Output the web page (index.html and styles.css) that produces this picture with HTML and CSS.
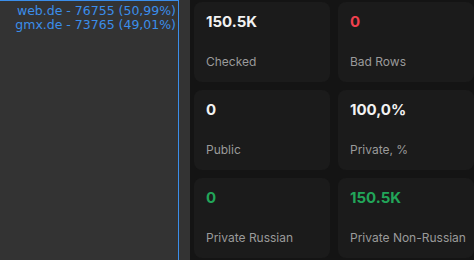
FILE: index.html
```html
<!DOCTYPE html>
<html lang="en">
<head>
    <meta charset="UTF-8">
    <meta name="viewport" content="width=device-width, initial-scale=1.0">
    <title>Stats</title>
    <link rel="stylesheet" href="styles.css">
</head>
<body>
    <div class="side">
        <div class="domains">
            <div>web.de - 76755 (50,99%)</div>
            <div>gmx.de - 73765 (49,01%)</div>
        </div>
    </div>

    <div class="stats">
        <div class="card">
            <div class="value">150.5K</div>
            <div class="label">Checked</div>
        </div>
        <div class="card">
            <div class="value bad">0</div>
            <div class="label">Bad Rows</div>
        </div>
        <div class="card">
            <div class="value">0</div>
            <div class="label">Public</div>
        </div>
        <div class="card">
            <div class="value">100,0%</div>
            <div class="label">Private, %</div>
        </div>
        <div class="card">
            <div class="value good">0</div>
            <div class="label">Private Russian</div>
        </div>
        <div class="card">
            <div class="value good">150.5K</div>
            <div class="label">Private Non-Russian</div>
        </div>
    </div>
</body>
</html>
```

FILE: styles.css
```css
:root {
    --bg-color: #141414;
    --card-bg: #1b1b1b;
    --side-bg: #333333;
    --blue: #3b8eea;
    --label-color: #9a9a9a;
}

body {
    margin: 0;
    height: 260px;
    overflow: hidden;
    background-color: var(--bg-color);
    display: flex;
    font-family: Inter, "Noto Sans", sans-serif;
}

.side {
    width: 190px;
    flex-shrink: 0;
    background: var(--side-bg);
    padding-right: 11px;
    box-sizing: border-box;
}

.domains {
    height: 100%;
    border-top: 1px solid var(--blue);
    border-right: 1px solid var(--blue);
    box-sizing: border-box;
    padding: 3px 2px 0 0;
    text-align: right;
    color: var(--blue);
    font-family: "DejaVu Sans", sans-serif;
    font-size: 12.5px;
    line-height: 14px;
    white-space: nowrap;
}

.stats {
    display: grid;
    grid-template-columns: 136px 136px;
    grid-auto-rows: 80px;
    gap: 8px;
    padding: 2px 0 0 4px;
}

.card {
    background: var(--card-bg);
    border-radius: 8px;
    padding: 11px 12px 13px;
    display: flex;
    flex-direction: column;
    justify-content: space-between;
    box-sizing: border-box;
}

.value {
    color: #f2f2f2;
    font-size: 15px;
    font-weight: 700;
    line-height: 18px;
}

.value.bad {
    color: #f0404e;
}

.value.good {
    color: #22a559;
}

.label {
    color: var(--label-color);
    font-size: 12px;
    line-height: 15px;
    white-space: nowrap;
}
```
